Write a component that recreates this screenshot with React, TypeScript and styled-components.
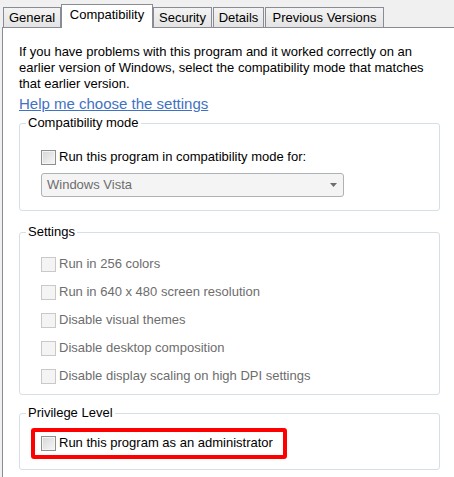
import React from "react";
import styled, { createGlobalStyle } from "styled-components";

const Global = createGlobalStyle`
  html, body { margin: 0; padding: 0; background: #f0f0f0; }
  body { font-family: "Liberation Sans", Arial, sans-serif; font-size: 13px; color: #000; }
  * { box-sizing: border-box; }
`;

const Window = styled.div`
  width: 454px;
  height: 477px;
  display: flex;
  flex-direction: column;
  overflow: hidden;
`;

const TabStrip = styled.div`
  display: flex;
  align-items: flex-end;
  height: 27px;
  padding-left: 3px;
  gap: 1px;
  flex-shrink: 0;
`;

const Tab = styled.div<{ $active?: boolean; $width: number }>`
  position: relative;
  width: ${(p) => p.$width}px;
  height: ${(p) => (p.$active ? 24 : 20)}px;
  margin: ${(p) => (p.$active ? "0 -1px -1px -1px" : "0")};
  z-index: ${(p) => (p.$active ? 2 : 0)};
  border: 1px solid #898c95;
  border-bottom: none;
  background: ${(p) =>
    p.$active ? "#ffffff" : "linear-gradient(#f3f3f3, #e4e4e4)"};
  display: flex;
  align-items: center;
  justify-content: center;
  padding-bottom: ${(p) => (p.$active ? 3 : 0)}px;
  font-size: 13px;
  line-height: 16px;
  white-space: nowrap;
`;

const Panel = styled.div`
  position: relative;
  z-index: 1;
  flex: 1;
  margin-left: 2px;
  background: #ffffff;
  border-top: 1px solid #898c95;
  border-left: 1px solid #898c95;
  padding: 16px 0 0 16px;
`;

const Intro = styled.p`
  margin: 0;
  width: 420px;
  line-height: 16px;
`;

const HelpLink = styled.a`
  display: block;
  margin-top: 3px;
  font-size: 15px;
  line-height: 18px;
  color: #3f72c2;
  text-decoration: underline;
  cursor: pointer;
`;

const Group = styled.fieldset<{ $top: number }>`
  margin: ${(p) => p.$top}px 0 0 0;
  width: 421px;
  border: 1px solid #d5dfe5;
  border-radius: 3px;
  padding: 0;
  min-width: 0;
`;

const Legend = styled.legend`
  margin-left: 6px;
  padding: 0 2px;
  line-height: 16px;
  font-size: 13px;
  color: #000;
`;

const GroupBody = styled.div<{ $padTop: number; $padBottom: number }>`
  padding: ${(p) => p.$padTop}px 0 ${(p) => p.$padBottom}px 21px;
  display: flex;
  flex-direction: column;
  align-items: flex-start;
`;

const Rows = styled.div`
  display: flex;
  flex-direction: column;
  align-items: flex-start;
  gap: 12px;
`;

const Row = styled.label<{ $disabled?: boolean; $highlight?: boolean }>`
  position: relative;
  display: inline-flex;
  align-items: center;
  gap: 3px;
  height: 16px;
  line-height: 16px;
  color: ${(p) => (p.$disabled ? "#6d6d6d" : "#000")};
  white-space: nowrap;
  ${(p) =>
    p.$highlight &&
    `
    &::after {
      content: "";
      position: absolute;
      inset: -7px -14px -8px -10px;
      border: 4px solid #ff0000;
      border-radius: 3px;
      pointer-events: none;
    }
  `}
`;

const Box = styled.span<{ $disabled?: boolean }>`
  width: 15px;
  height: 15px;
  flex-shrink: 0;
  border: 1px solid ${(p) => (p.$disabled ? "#c9c9c9" : "#8e8f8f")};
  background: ${(p) =>
    p.$disabled ? "#f4f4f4" : "linear-gradient(135deg, #d6d6d6, #f7f7f7)"};
  box-shadow: inset 0 0 0 1px #f4f4f4;
`;

const Select = styled.div`
  margin-top: 8px;
  width: 303px;
  height: 24px;
  border: 1px solid #adb2b5;
  border-radius: 3px;
  background: #f4f4f4;
  display: flex;
  align-items: center;
  justify-content: space-between;
  padding: 0 6px 0 5px;
  color: #6d6d6d;
  line-height: 16px;
`;

const Arrow = styled.svg`
  width: 7px;
  height: 4px;
  display: block;
`;

type Opt = { text: string };
const settings: Opt[] = [
  { text: "Run in 256 colors" },
  { text: "Run in 640 x 480 screen resolution" },
  { text: "Disable visual themes" },
  { text: "Disable desktop composition" },
  { text: "Disable display scaling on high DPI settings" },
];

const tabs = [
  { label: "General", width: 58 },
  { label: "Compatibility", width: 92, active: true },
  { label: "Security", width: 59 },
  { label: "Details", width: 51 },
  { label: "Previous Versions", width: 119 },
];

export default function App() {
  return (
    <>
      <Global />
      <Window>
        <TabStrip>
          {tabs.map((t) => (
            <Tab key={t.label} $active={t.active} $width={t.width}>
              {t.label}
            </Tab>
          ))}
        </TabStrip>
        <Panel>
          <Intro>
            If you have problems with this program and it worked correctly on an
            earlier version of Windows, select the compatibility mode that matches
            that earlier version.
          </Intro>
          <HelpLink>Help me choose the settings</HelpLink>

          <Group $top={2}>
            <Legend>Compatibility mode</Legend>
            <GroupBody $padTop={18} $padBottom={13}>
              <Row>
                <Box />
                Run this program in compatibility mode for:
              </Row>
              <Select>
                <span>Windows Vista</span>
                <Arrow viewBox="0 0 7 4">
                  <path d="M0 0 H7 L3.5 4 Z" fill="#6d6d6d" />
                </Arrow>
              </Select>
            </GroupBody>
          </Group>

          <Group $top={13}>
            <Legend>Settings</Legend>
            <GroupBody $padTop={16} $padBottom={10}>
              <Rows>
                {settings.map((s) => (
                  <Row key={s.text} $disabled>
                    <Box $disabled />
                    {s.text}
                  </Row>
                ))}
              </Rows>
            </GroupBody>
          </Group>

          <Group $top={10}>
            <Legend>Privilege Level</Legend>
            <GroupBody $padTop={14} $padBottom={18}>
              <Row $highlight>
                <Box />
                Run this program as an administrator
              </Row>
            </GroupBody>
          </Group>
        </Panel>
      </Window>
    </>
  );
}
